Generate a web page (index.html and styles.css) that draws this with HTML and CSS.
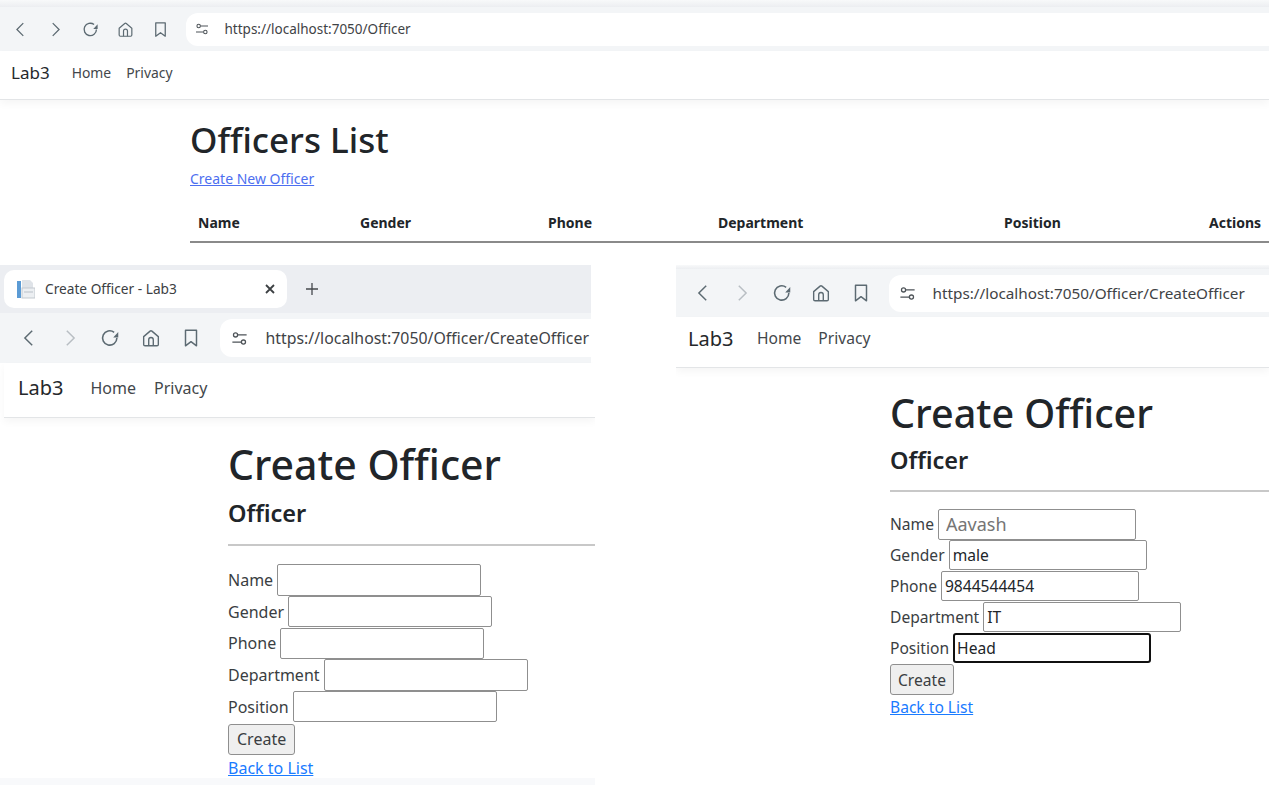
FILE: index.html
```html
<!DOCTYPE html>
<html lang="en">
<head>
<meta charset="utf-8">
<title>Officer screenshots</title>
<link rel="stylesheet" href="styles.css">
</head>
<body>
<svg class="defs" width="0" height="0" aria-hidden="true">
  <symbol id="i-back" viewBox="0 0 24 24"><path d="M15.5 4 7.5 12l8 8" fill="none" stroke="currentColor" stroke-width="1.6"/></symbol>
  <symbol id="i-fwd" viewBox="0 0 24 24"><path d="m8.5 4 8 8-8 8" fill="none" stroke="currentColor" stroke-width="1.6"/></symbol>
  <symbol id="i-reload" viewBox="0 0 24 24"><path d="M19.500 12a7.800 7.800 0 1 1-3-6.200" fill="none" stroke="currentColor" stroke-width="1.700"/><path d="M21 5.500v6h-5.500z" fill="currentColor"/></symbol>
  <symbol id="i-home" viewBox="0 0 24 24"><path d="M4 10.500 11 4.500a1.500 1.500 0 0 1 2 0l7 6V19a1.500 1.500 0 0 1-1.500 1.500h-13A1.500 1.500 0 0 1 4 19z" fill="none" stroke="currentColor" stroke-width="1.500"/><path d="M9.500 20.500V14a2.500 2.500 0 0 1 5 0v6.500" fill="none" stroke="currentColor" stroke-width="1.500"/></symbol>
  <symbol id="i-mark" viewBox="0 0 24 24"><path d="M6 3.500h12v17l-6-4.500-6 4.500z" fill="none" stroke="currentColor" stroke-width="1.600" stroke-linejoin="round"/></symbol>
  <symbol id="i-tune" viewBox="0 0 24 24"><circle cx="7" cy="7.500" r="2.600" fill="none" stroke="currentColor" stroke-width="1.600"/><path d="M10 7.500h11M3 16.500h11" fill="none" stroke="currentColor" stroke-width="1.600"/><circle cx="17" cy="16.500" r="2.600" fill="none" stroke="currentColor" stroke-width="1.600"/></symbol>
</svg>

<section class="win win-a">
  <div class="chrome-top"></div>
  <div class="toolbar">
    <span class="tool"><svg class="ico"><use href="#i-back"/></svg></span>
    <span class="tool"><svg class="ico"><use href="#i-fwd"/></svg></span>
    <span class="tool"><svg class="ico"><use href="#i-reload"/></svg></span>
    <span class="tool"><svg class="ico"><use href="#i-home"/></svg></span>
    <span class="tool"><svg class="ico"><use href="#i-mark"/></svg></span>
    <div class="address"><svg class="tune"><use href="#i-tune"/></svg><span class="url">https://localhost:7050/Officer</span></div>
  </div>
  <nav class="nav"><a class="brand">Lab3</a><a class="nav-link home">Home</a><a class="nav-link">Privacy</a></nav>
  <main class="main">
    <h1 class="title">Officers List</h1>
    <a class="link create-link" href="#">Create New Officer</a>
    <table class="table">
      <thead>
        <tr><th class="c1">Name</th><th class="c2">Gender</th><th class="c3">Phone</th><th class="c4">Department</th><th class="c5">Position</th><th class="c6">Actions</th></tr>
      </thead>
    </table>
  </main>
</section>

<section class="win win-b">
  <div class="tabstrip">
    <div class="tab">
      <svg class="favicon" viewBox="0 0 18 20"><path d="M5 1h8l3 3v6h-11z" fill="#dfe3e8"/><rect x="0" y="2" width="4" height="17" fill="#5b9bd5"/><rect x="5" y="9" width="13" height="10" fill="#eceff2" stroke="#c3c9cf" stroke-width="1"/><path d="M7 13h9" stroke="#b9c0c8" stroke-width="1"/></svg>
      <span class="tab-title">Create Officer - Lab3</span>
      <svg class="tab-x" viewBox="0 0 12 12"><path d="m2 2 8 8M10 2l-8 8" stroke="currentColor" stroke-width="1.800"/></svg>
    </div>
    <svg class="tab-new" viewBox="0 0 14 14"><path d="M7 1v12M1 7h12" stroke="currentColor" stroke-width="1.300"/></svg>
  </div>
  <div class="toolbar">
    <span class="tool"><svg class="ico"><use href="#i-back"/></svg></span>
    <span class="tool off"><svg class="ico"><use href="#i-fwd"/></svg></span>
    <span class="tool"><svg class="ico"><use href="#i-reload"/></svg></span>
    <span class="tool"><svg class="ico"><use href="#i-home"/></svg></span>
    <span class="tool"><svg class="ico"><use href="#i-mark"/></svg></span>
    <div class="address"><svg class="tune"><use href="#i-tune"/></svg><span class="url">https://localhost:7050/Officer/CreateOfficer</span></div>
  </div>
  <nav class="nav"><a class="brand">Lab3</a><a class="nav-link home">Home</a><a class="nav-link">Privacy</a></nav>
  <main class="main">
    <h1 class="title">Create Officer</h1>
    <h4 class="sub">Officer</h4>
    <hr class="rule">
    <form class="form">
      <div class="row"><label class="lbl">Name</label><input class="field" type="text"></div>
      <div class="row"><label class="lbl">Gender</label><input class="field" type="text"></div>
      <div class="row"><label class="lbl">Phone</label><input class="field" type="text"></div>
      <div class="row"><label class="lbl">Department</label><input class="field" type="text"></div>
      <div class="row"><label class="lbl">Position</label><input class="field" type="text"></div>
      <button class="btn" type="button">Create</button>
      <a class="link back" href="#">Back to List</a>
    </form>
  </main>
  <div class="foot"></div>
</section>

<section class="win win-c">
  <div class="chrome-top"></div>
  <div class="toolbar">
    <span class="tool"><svg class="ico"><use href="#i-back"/></svg></span>
    <span class="tool off"><svg class="ico"><use href="#i-fwd"/></svg></span>
    <span class="tool"><svg class="ico"><use href="#i-reload"/></svg></span>
    <span class="tool"><svg class="ico"><use href="#i-home"/></svg></span>
    <span class="tool"><svg class="ico"><use href="#i-mark"/></svg></span>
    <div class="address"><svg class="tune"><use href="#i-tune"/></svg><span class="url">https://localhost:7050/Officer/CreateOfficer</span></div>
  </div>
  <nav class="nav"><a class="brand">Lab3</a><a class="nav-link home">Home</a><a class="nav-link">Privacy</a></nav>
  <main class="main">
    <h1 class="title">Create Officer</h1>
    <h4 class="sub">Officer</h4>
    <hr class="rule">
    <form class="form">
      <div class="row"><label class="lbl">Name</label><input class="field ph" type="text" placeholder="Aavash"></div>
      <div class="row"><label class="lbl">Gender</label><input class="field" type="text" value="male"></div>
      <div class="row"><label class="lbl">Phone</label><input class="field" type="text" value="9844544454"></div>
      <div class="row"><label class="lbl">Department</label><input class="field" type="text" value="IT"></div>
      <div class="row"><label class="lbl">Position</label><input class="field focus" type="text" value="Head"></div>
      <button class="btn" type="button">Create</button>
      <a class="link back" href="#">Back to List</a>
    </form>
  </main>
</section>
</body>
</html>
```

FILE: styles.css
```css
* { box-sizing: border-box; }
html, body { margin: 0; height: 100%; }
body {
  position: relative;
  width: 1269px;
  height: 788px;
  overflow: hidden;
  background: #fff;
  font-family: "Noto Sans", "Open Sans", sans-serif;
  color: #212529;
}
.defs { position: absolute; }

.win { position: absolute; overflow: hidden; background: #fff; }
.win-a {
  left: 0; top: 0; width: 1269px; height: 245px;
  --top-h: 7px; --bar-h: 44px; --step: 35px; --pad: 2.5px; --ico: 19px;
  --addr-h: 33px; --tune: 16px; --tune-x: 8px; --tune-gap: 15px; --url: 13.500px;
  --nav-h: 49px; --nav-pb: 5px; --nav-pad: 11px; --brand: 17px; --brand-gap: 22px; --navfs: 13.900px; --nav-gap: 15px;
}
.win-b {
  left: 0; top: 265px; width: 595px; height: 520px;
  --bar-h: 50px; --step: 40.500px; --pad: 9px; --ico: 22px;
  --addr-h: 38px; --tune: 19px; --tune-x: 10px; --tune-gap: 17px; --url: 15.850px;
  --nav-h: 55px; --nav-pb: 5px; --nav-pad: 14px; --brand: 20px; --brand-gap: 27px; --navfs: 16px; --nav-gap: 18px;
  --main-x: 228px; --main-top: 22px; --h1: 41px; --h4: 23.500px; --sub-top: 8.400px; --rule-top: 16px;
  --fs: 16px; --row: 31.700px; --field: 204px; --gap: 4px; --back-top: 2px; --btn-x: 8px;
}
.win-c {
  left: 676px; top: 265px; width: 593px; height: 460px;
  --top-h: 4px; --bar-h: 48px; --step: 39.500px; --pad: 7px; --ico: 22px;
  --addr-h: 37px; --tune: 19px; --tune-x: 9px; --tune-gap: 16px; --url: 15.300px;
  --nav-h: 51px; --nav-pb: 8px; --nav-pad: 12px; --brand: 20px; --brand-gap: 23.500px; --navfs: 15.600px; --nav-gap: 17px;
  --main-x: 214px; --main-top: 22px; --h1: 39.500px; --h4: 23.500px; --sub-top: 8px; --rule-top: 14px;
  --fs: 15.600px; --row: 30.900px; --field: 198px; --gap: 4px; --back-top: 1px; --btn-x: 7px;
}

.chrome-top { height: var(--top-h); background: linear-gradient(#f8f9fa 0, #eceef1 100%); }
.tabstrip { height: 48px; width: 591px; background: #eceef2; display: flex; align-items: center; padding: 5px 0 0 4px; }
.tab {
  width: 283px; height: 38px; margin-bottom: 5px; background: #fff; border-radius: 10px;
  display: flex; align-items: center; padding: 0 11px 0 13px; font-size: 13.700px; color: #3c4043;
}
.favicon { width: 18px; height: 20px; flex: none; }
.tab-title { margin-left: 10px; flex: 1; padding-bottom: 2px; }
.tab-x { width: 12px; height: 12px; color: #3c4043; }
.tab-new { width: 14px; height: 14px; margin: -5px 0 0 18px; color: #45494d; }

.toolbar {
  height: var(--bar-h); background: #f3f5f7; display: flex; align-items: center; padding-left: var(--pad);
}
.win-b .toolbar { width: 591px; overflow: hidden; }
.tool { width: var(--step); flex: none; display: flex; justify-content: center; color: #5c6a72; }
.tool.off { color: #b8bec3; }
.ico { width: var(--ico); height: var(--ico); }
.address {
  flex: 1; min-width: 0; height: var(--addr-h); margin-left: 8px; background: #fff;
  border-radius: 12px 0 0 12px; display: flex; align-items: center; padding-left: var(--tune-x);
}
.tune { width: var(--tune); height: var(--tune); flex: none; color: #4d5358; }
.url { margin-left: var(--tune-gap); font-size: var(--url); color: #3f4346; white-space: nowrap; }

.nav {
  height: var(--nav-h); display: flex; align-items: center; padding: 0 0 var(--nav-pb) var(--nav-pad);
  border-bottom: 1px solid #e3e5e7; box-shadow: 0 4px 8px rgba(0,0,0,.04); position: relative;
}
.win-b .nav { margin-left: 4px; }
.brand { font-size: var(--brand); color: #25282b; margin-right: var(--brand-gap); }
.nav-link { font-size: var(--navfs); color: #43474b; }
.nav-link.home { margin-right: var(--nav-gap); }

.win-a .main { padding: 18px 0 0 190px; }
.title { margin: 0; font-weight: 500; }
.win-a .title { font-size: 35px; line-height: 44px; }
.create-link { display: block; margin-top: 7px; font-size: 14px; line-height: 19px; width: max-content; color: #4d6ff0; }
.table { margin-top: 25px; width: 1079px; border-collapse: collapse; table-layout: fixed; }
.table th { padding: 0 0 9px 8px; height: 28px; font-size: 14px; line-height: 19px; font-weight: 700; text-align: left; border-bottom: 2px solid #8a8a8a; color: #212529; }
.c1 { width: 162px; } .c2 { width: 188px; } .c3 { width: 170px; } .c4 { width: 286px; } .c5 { width: 205px; }

.win-b .main, .win-c .main { padding: var(--main-top) 0 0 var(--main-x); }
.win-b .title, .win-c .title { font-size: var(--h1); line-height: 1.2; }
.sub { margin: var(--sub-top) 0 0; font-size: var(--h4); line-height: 1.3; font-weight: 600; }
.rule { margin: var(--rule-top) 0 18px; border: 0; border-top: 2px solid #c8c8c8; }
.win-c .rule { margin-bottom: 17px; }
.form { display: flex; flex-direction: column; align-items: flex-start; font-size: var(--fs); }
.row { height: var(--row); display: flex; align-items: center; gap: var(--gap); }
.lbl { color: #3a3e42; white-space: nowrap; }
.field {
  width: var(--field); height: calc(var(--row) - 0.500px); font: inherit; padding: 1px 3px; color: #212529;
  border: 1px solid #8f8f8f; border-radius: 2px; background: #fff; outline: 0;
}
.field.ph { padding-left: 7px; font-size: 18px; }
.field.ph::placeholder { color: #757575; opacity: 1; }
.field.focus { border: 2px solid #101010; border-radius: 3px; padding: 0 2px; }
.btn {
  height: 31px; padding: 0 var(--btn-x); font: inherit; color: #3a3e42; background: #efefef;
  border: 1px solid #8f8f8f; border-radius: 3px; margin-top: 1px;
}
.back { margin-top: var(--back-top); font-size: var(--fs); line-height: 22px; color: #1a7bff; }
.foot { position: absolute; left: 0; right: 0; bottom: 0; height: 7px; background: #f8f9fb; }
```
